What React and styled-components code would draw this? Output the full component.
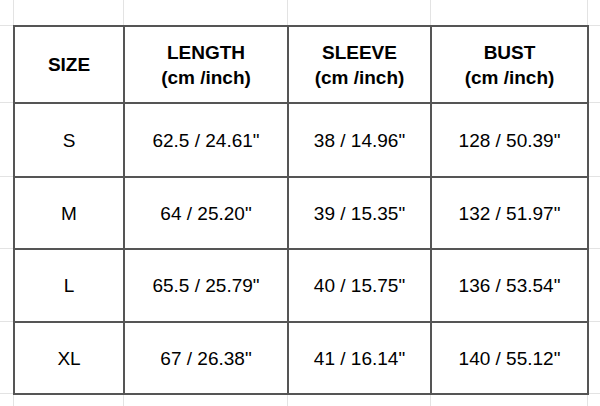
import React from "react";
import styled, { createGlobalStyle } from "styled-components";

const Global = createGlobalStyle`
  html, body { margin: 0; padding: 0; background: #fff; }
  body { font-family: "Liberation Sans", Arial, sans-serif; color: #000; }
`;

const COLS = [108, 162, 141, 155];
const ROWS = [75, 72, 70, 71, 70];
const LINE = 2;

const Sheet = styled.div`
  width: 600px;
  height: 406px;
  overflow: hidden;
  display: grid;
  grid-template-columns: 13px ${COLS.reduce((a, b) => a + b + LINE, LINE)}px 1fr;
  grid-template-rows: 25px ${ROWS.reduce((a, b) => a + b + LINE, LINE)}px 1fr;
`;

const Corner = styled.div``;

const HStrip = styled.div`
  display: grid;
  grid-template-columns: ${COLS.map((c) => `${c + LINE}px`).join(" ")} 1fr;
`;

const HCell = styled.div`
  border-left: 1px solid #e3e3e3;
`;

const VStrip = styled.div`
  display: grid;
  grid-template-rows: ${ROWS.map((r) => `${r + LINE}px`).join(" ")} 1fr;
`;

const VCell = styled.div`
  border-top: 1px solid #e3e3e3;
`;

const Table = styled.div`
  display: grid;
  grid-template-columns: ${COLS.map((c) => `${c}px`).join(" ")};
  grid-template-rows: ${ROWS.map((r) => `${r}px`).join(" ")};
  gap: ${LINE}px;
  padding: ${LINE}px;
  background: #555;
`;

const Cell = styled.div`
  background: #fff;
  display: flex;
  flex-direction: column;
  align-items: center;
  justify-content: center;
  text-align: center;
  font-size: 19px;
  line-height: 25px;
  font-weight: ${(p) => (p.$head ? 700 : 400)};
`;

const headers = [
  ["SIZE"],
  ["LENGTH", "(cm /inch)"],
  ["SLEEVE", "(cm /inch)"],
  ["BUST", "(cm /inch)"],
];

const data = [
  ["S", '62.5 / 24.61"', '38 / 14.96"', '128 / 50.39"'],
  ["M", '64 / 25.20"', '39 / 15.35"', '132 / 51.97"'],
  ["L", '65.5 / 25.79"', '40 / 15.75"', '136 / 53.54"'],
  ["XL", '67 / 26.38"', '41 / 16.14"', '140 / 55.12"'],
];

export default function App() {
  return (
    <>
      <Global />
      <Sheet>
        <Corner />
        <HStrip>
          {[0, 1, 2, 3, 4].map((i) => (
            <HCell key={i} />
          ))}
        </HStrip>
        <Corner />
        <VStrip>
          {[0, 1, 2, 3, 4, 5].map((i) => (
            <VCell key={i} />
          ))}
        </VStrip>
        <Table>
          {headers.map((h, i) => (
            <Cell key={`h${i}`} $head>
              {h.map((line) => (
                <span key={line}>{line}</span>
              ))}
            </Cell>
          ))}
          {data.map((row, r) =>
            row.map((v, c) => <Cell key={`${r}-${c}`}>{v}</Cell>)
          )}
        </Table>
        <VStrip>
          {[0, 1, 2, 3, 4, 5].map((i) => (
            <VCell key={i} />
          ))}
        </VStrip>
        <Corner />
        <HStrip>
          {[0, 1, 2, 3, 4].map((i) => (
            <HCell key={i} />
          ))}
        </HStrip>
        <Corner />
      </Sheet>
    </>
  );
}
